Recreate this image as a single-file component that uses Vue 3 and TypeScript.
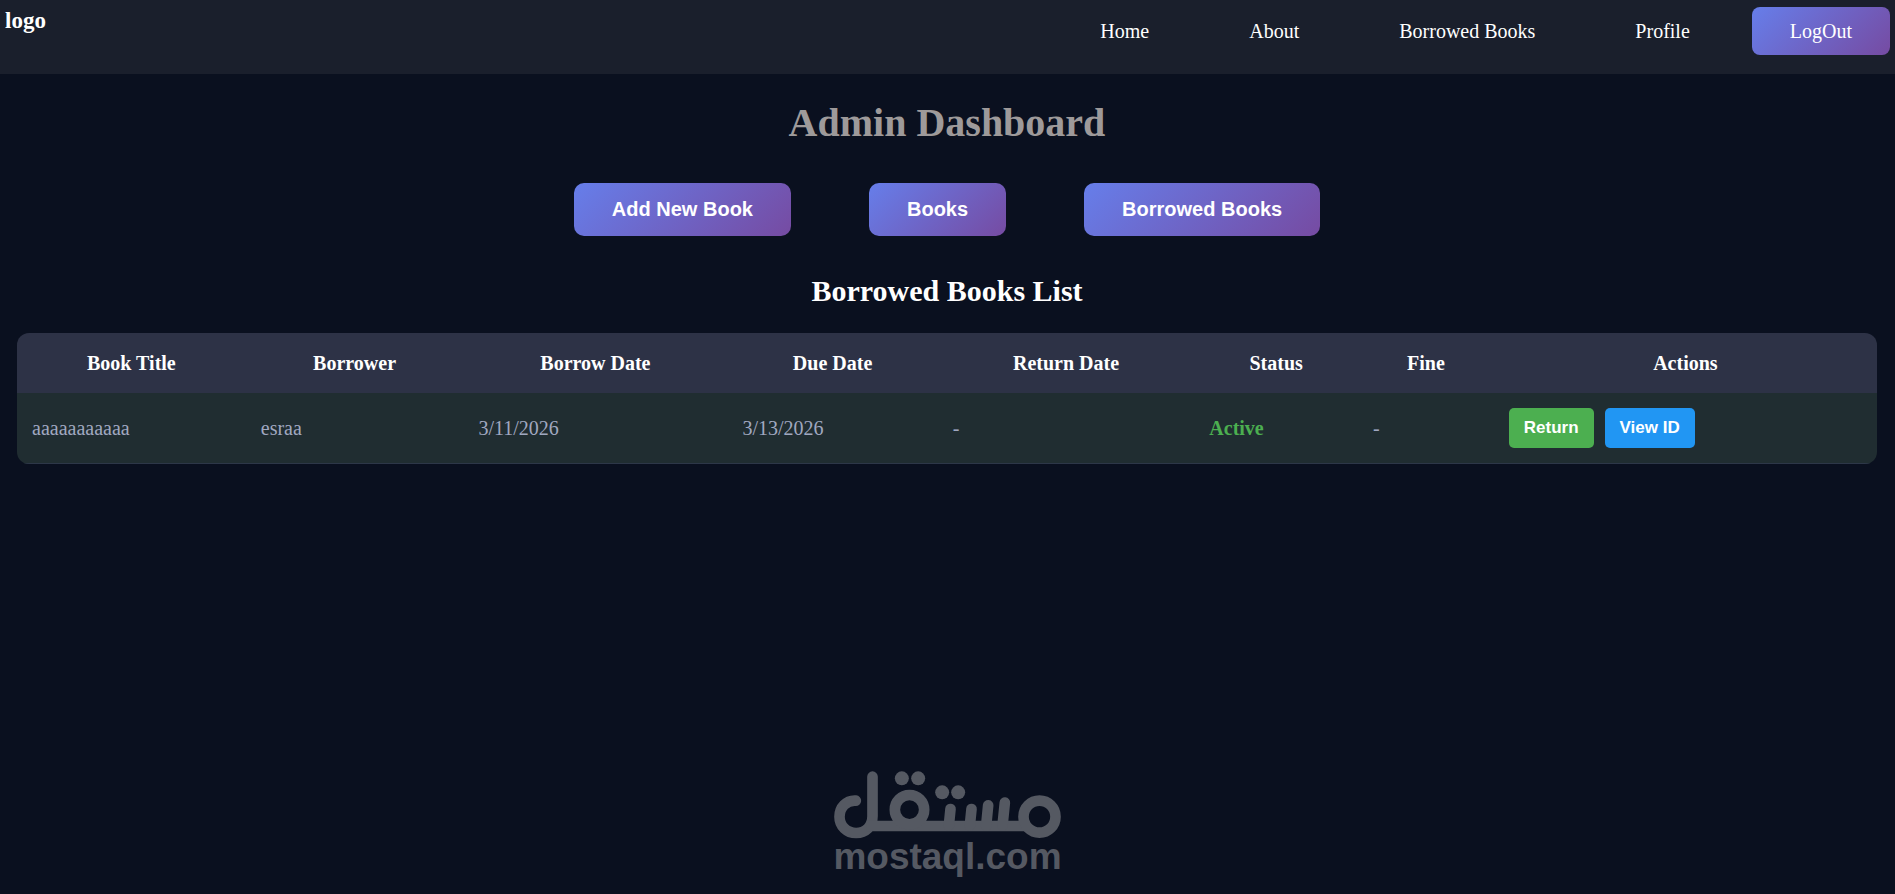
<script setup lang="ts">
interface Loan {
  title: string
  borrower: string
  borrowDate: string
  dueDate: string
  returnDate: string
  status: string
  fine: string
}

const links: string[] = ['Home', 'About', 'Borrowed Books', 'Profile']
const sections: string[] = ['Add New Book', 'Books', 'Borrowed Books']
const columns: { label: string; key: string }[] = [
  { label: 'Book Title', key: 'title' },
  { label: 'Borrower', key: 'borrower' },
  { label: 'Borrow Date', key: 'borrow-date' },
  { label: 'Due Date', key: 'due-date' },
  { label: 'Return Date', key: 'return-date' },
  { label: 'Status', key: 'status' },
  { label: 'Fine', key: 'fine' },
  { label: 'Actions', key: 'actions' },
]
const loans: Loan[] = [
  {
    title: 'aaaaaaaaaaa',
    borrower: 'esraa',
    borrowDate: '3/11/2026',
    dueDate: '3/13/2026',
    returnDate: '-',
    status: 'Active',
    fine: '-',
  },
]
</script>

<template>
  <div class="page">
    <header class="topbar">
      <h3 class="brand">logo</h3>
      <nav class="nav">
        <a v-for="link in links" :key="link" href="#" class="nav-link">{{ link }}</a>
        <a href="#" class="nav-link logout">LogOut</a>
      </nav>
    </header>

    <main class="content">
      <h1 class="title">Admin Dashboard</h1>
      <div class="sections">
        <button v-for="section in sections" :key="section" type="button" class="section-btn">{{ section }}</button>
      </div>
      <h2 class="subtitle">Borrowed Books List</h2>

      <table class="loans">
        <colgroup>
          <col v-for="column in columns" :key="column.key" :class="'col-' + column.key" />
        </colgroup>
        <thead>
          <tr>
            <th v-for="column in columns" :key="column.key" scope="col">{{ column.label }}</th>
          </tr>
        </thead>
        <tbody>
          <tr v-for="loan in loans" :key="loan.title">
            <td>{{ loan.title }}</td>
            <td>{{ loan.borrower }}</td>
            <td>{{ loan.borrowDate }}</td>
            <td>{{ loan.dueDate }}</td>
            <td>{{ loan.returnDate }}</td>
            <td class="status">{{ loan.status }}</td>
            <td>{{ loan.fine }}</td>
            <td>
              <div class="actions">
                <button type="button" class="action return">Return</button>
                <button type="button" class="action view">View ID</button>
              </div>
            </td>
          </tr>
        </tbody>
      </table>
    </main>

    <footer class="watermark">
      <svg class="mark" viewBox="42 32 680 204" role="img" aria-label="مستقل">
        <g fill="none" stroke="currentColor" stroke-width="32" stroke-linecap="round">
          <path d="M107 121 C78 119 58 142 58 169 C58 197 80 218 108 218 C136 218 157 198 157 168 V49" />
          <path d="M140 197 H628" stroke-linecap="butt" />
          <circle cx="268" cy="148" r="44" />
          <path d="M391 146 L386 196" />
          <path d="M454 146 L449 196" />
          <path d="M504 135 L498 196" />
          <path d="M554 127 L547 196" />
          <circle cx="658" cy="169" r="48" />
        </g>
        <g fill="currentColor">
          <circle cx="245" cy="54" r="21" />
          <circle cx="294" cy="54" r="21" />
          <circle cx="366" cy="96" r="21" />
          <circle cx="414" cy="96" r="21" />
        </g>
      </svg>
      <span class="domain">mostaql.com</span>
    </footer>
  </div>
</template>

<style>
body {
  margin: 0;
  background: #0a101f;
}
</style>

<style scoped>
.page {
  display: flex;
  flex-direction: column;
  box-sizing: border-box;
  min-height: 100vh;
  background: #0a101f;
  color: #fff;
  font-family: "Liberation Serif", "Times New Roman", serif;
  font-size: 20px;
  line-height: 23px;
}

.topbar {
  display: flex;
  justify-content: space-between;
  align-items: flex-start;
  box-sizing: border-box;
  min-height: 74px;
  padding: 7px 5px;
  background: #1a1f2c;
}

.brand {
  margin: 0;
  font-size: 23px;
  line-height: 27px;
}

.nav {
  display: flex;
  gap: 24px;
}

.nav-link {
  padding: 13px 38px 12px;
  color: #fff;
  text-decoration: none;
}

.logout {
  border-radius: 8px;
  background: linear-gradient(135deg, #667eea, #764ba2);
}

.content {
  padding: 26px 18px 0 17px;
}

.title {
  margin: 0;
  color: #9e9a9a;
  font-size: 40px;
  line-height: 46px;
  text-align: center;
}

.sections {
  display: flex;
  justify-content: center;
  gap: 78px;
  margin-top: 37px;
}

.section-btn {
  padding: 15px 38px;
  border: 0;
  border-radius: 10px;
  background: linear-gradient(135deg, #667eea, #764ba2);
  color: #fff;
  font: bold 20px/23px "Liberation Sans", Arial, sans-serif;
  cursor: pointer;
}

.subtitle {
  margin: 38px 0 25px;
  font-size: 30px;
  line-height: 34px;
  text-align: center;
}

.loans {
  width: 100%;
  table-layout: fixed;
  border-collapse: collapse;
  border-radius: 12px;
  overflow: hidden;
}

.col-title { width: 12.3%; }
.col-borrower { width: 11.7%; }
.col-borrow-date { width: 14.2%; }
.col-due-date { width: 11.3%; }
.col-return-date { width: 13.8%; }
.col-status { width: 8.8%; }
.col-fine { width: 7.3%; }
.col-actions { width: 20.6%; }

th {
  padding: 19px 15px 18px;
  background: #2d3246;
  text-align: center;
}

td {
  padding: 15px;
  border-bottom: 1px solid #2d3748;
  background: #202d31;
  color: #a0a8c0;
}

.status {
  color: #4caf50;
  font-weight: bold;
}

.actions {
  display: flex;
  gap: 11px;
}

.action {
  padding: 10px 15px;
  border: 0;
  border-radius: 5px;
  color: #fff;
  font: bold 17px/20px "Liberation Sans", Arial, sans-serif;
  cursor: pointer;
}

.return {
  background: #4caf50;
}

.view {
  background: #2196f3;
}

.watermark {
  display: flex;
  flex-direction: column;
  align-items: center;
  margin-top: auto;
  padding-bottom: 20px;
  color: #555962;
}

.mark {
  width: 227px;
  height: 68px;
}

.domain {
  font: bold 37px/35px "Liberation Sans", Arial, sans-serif;
}
</style>
